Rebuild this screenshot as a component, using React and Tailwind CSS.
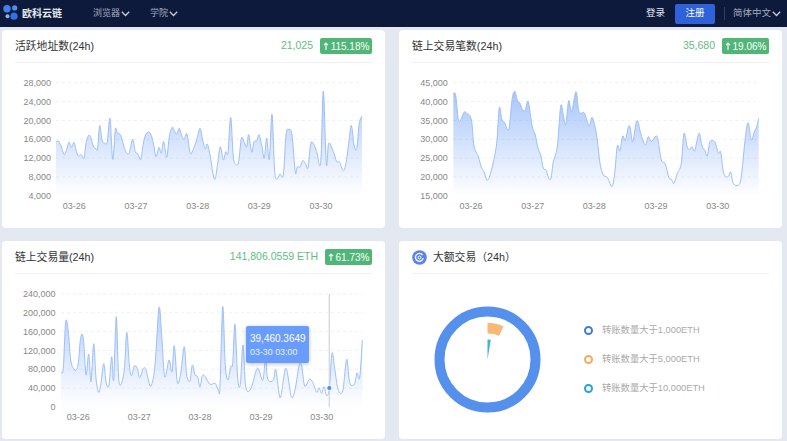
import React from "react";

const FONT = '"Liberation Sans","Noto Sans CJK SC",sans-serif';

const data1 = [168,245,176,244,183,258,192,283,198,275,207,247,214,262,222,247,228,270,235,288,244,284,252,295,258,250,266,226,272,232,280,258,290,268,293,265,299,197,306,240,314,250,322,245,330,175,338,298,346,208,352,218,362,226,372,260,380,280,388,278,398,238,406,275,414,282,422,298,432,240,442,217,452,222,460,250,468,290,477,262,484,280,491,244,500,292,508,230,516,202,523,212,530,222,538,205,546,230,553,236,561,222,570,278,578,272,590,240,600,205,608,240,616,266,622,252,630,285,640,345,646,356,653,310,661,260,670,300,677,275,684,278,692,172,700,290,708,314,716,305,724,235,732,245,740,260,746,224,755,277,762,245,770,243,777,224,785,255,793,295,800,234,808,298,816,163,824,335,832,356,840,342,850,345,858,225,866,208,876,225,886,337,892,320,900,322,908,302,916,310,924,323,932,252,940,250,950,275,962,308,970,93,979,312,986,250,1000,275,1010,305,1018,305,1030,332,1038,310,1046,250,1054,196,1062,255,1070,266,1078,190,1086,168];

const data2 = [160,100,167,106,175,178,182,180,192,157,200,160,214,178,222,258,235,290,244,322,252,335,260,360,268,352,278,315,290,250,298,143,306,180,314,188,322,208,328,200,336,120,344,94,352,120,360,130,368,150,376,150,384,123,392,170,398,205,406,225,414,265,422,285,430,325,438,330,446,355,453,355,460,305,472,260,482,138,490,165,497,195,506,122,515,155,528,95,537,155,552,158,560,178,568,198,576,172,585,200,592,240,600,310,610,345,622,352,636,380,644,340,652,258,660,272,668,228,676,242,684,205,690,200,698,245,708,190,714,185,722,220,736,255,745,230,754,245,768,228,774,240,784,300,796,312,806,352,814,358,822,370,832,340,844,310,852,220,862,262,870,268,876,260,884,272,897,220,906,258,915,272,922,288,930,245,945,247,955,280,962,276,970,335,978,350,986,348,992,336,1000,370,1015,376,1024,350,1034,250,1044,188,1054,240,1062,218,1070,200,1076,175];

const data3 = [183,410,190,400,197,260,205,290,212,375,222,403,228,405,235,385,242,308,250,310,258,420,266,357,273,440,281,326,288,430,296,472,303,445,311,386,319,445,327,450,335,365,341,435,349,245,357,440,372,412,380,292,388,390,394,422,403,393,412,400,419,428,430,400,438,405,449,450,456,445,465,390,477,218,485,300,494,425,507,375,516,410,523,332,532,442,542,415,553,335,560,420,570,438,577,390,585,420,593,425,600,456,607,422,615,424,630,448,645,445,655,465,660,455,668,215,676,390,684,435,692,395,698,385,705,268,713,430,721,448,729,330,737,455,752,462,770,403,778,408,785,432,790,430,797,370,803,432,820,436,827,403,838,480,844,478,858,400,874,485,886,460,897,392,905,392,914,453,928,433,938,442,950,472,957,458,965,475,972,455,980,482,988,460,996,355,1004,400,1014,462,1028,468,1040,373,1049,443,1063,448,1071,414,1079,428,1087,315];

// crop coords from the reference -> chart px
function toPoints(flat, dx, dy) {
  const pts = [];
  for (let i = 0; i < flat.length; i += 2) pts.push([flat[i] / 3 + dx, flat[i + 1] / 3 + dy]);
  return pts;
}

function smooth(pts) {
  let d = `M${pts[0][0].toFixed(1)} ${pts[0][1].toFixed(1)}`;
  for (let i = 0; i < pts.length - 1; i++) {
    const p0 = pts[i - 1] || pts[i];
    const p1 = pts[i];
    const p2 = pts[i + 1];
    const p3 = pts[i + 2] || p2;
    const c1x = p1[0] + (p2[0] - p0[0]) / 6;
    const c1y = p1[1] + (p2[1] - p0[1]) / 6;
    const c2x = p2[0] - (p3[0] - p1[0]) / 6;
    const c2y = p2[1] - (p3[1] - p1[1]) / 6;
    d += `C${c1x.toFixed(1)} ${c1y.toFixed(1)} ${c2x.toFixed(1)} ${c2y.toFixed(1)} ${p2[0].toFixed(1)} ${p2[1].toFixed(1)}`;
  }
  return d;
}

const Chart = ({ id, data, dx, dy, labels, gridTop, gridStep, labelRight, dates, dateY, children, opacity }) => {
  const pts = toPoints(data, dx, dy);
  const line = smooth(pts);
  const x0 = pts[0][0];
  const x1 = pts[pts.length - 1][0];
  const bottom = gridTop + gridStep * (labels.length - 1);
  const top = Math.min(...pts.map((p) => p[1]));
  return (
    <svg width="383" height="165" className="block" style={{ fontFamily: FONT }}>
      <defs>
        <linearGradient id={id} gradientUnits="userSpaceOnUse" x1="0" y1={top} x2="0" y2={bottom}>
          <stop offset="0" stopColor="#6ea0f8" stopOpacity={opacity} />
          <stop offset="1" stopColor="#6ea0f8" stopOpacity="0" />
        </linearGradient>
      </defs>
      {labels.map((l, i) => {
        const y = gridTop + gridStep * i;
        return (
          <g key={l}>
            {i < labels.length - 1 && (
              <line x1={x0} x2={x1} y1={y} y2={y} stroke="#eef0f4" strokeWidth="1" strokeDasharray="3 3" />
            )}
            <text x={labelRight} y={y + 3.2} textAnchor="end" fontSize="9" fill="#888">
              {l}
            </text>
          </g>
        );
      })}
      <path d={`${line}L${x1} ${bottom}L${x0} ${bottom}Z`} fill={`url(#${id})`} />
      <path d={line} fill="none" stroke="#9dbffa" strokeWidth="1" />
      {dates.map((d) => (
        <text key={d[0]} x={d[1]} y={dateY} textAnchor="middle" fontSize="9" fill="#888">
          {d[0]}
        </text>
      ))}
      {children}
    </svg>
  );
};

const Chevron = ({ className }) => (
  <svg width="9" height="6" viewBox="0 0 9 6" className={className} fill="none" stroke="currentColor" strokeWidth="1.3">
    <path d="M0.8 0.8l3.7 3.7 3.7-3.7" />
  </svg>
);

const Badge = ({ children, width }) => (
  <span className={`flex h-[16px] items-center justify-center gap-[2px] rounded-[2px] bg-[#50b677] text-[10px] text-white ${width}`}>
    <svg width="6" height="8" viewBox="0 0 6 8" fill="none" stroke="#fff" strokeWidth="1.1">
      <path d="M3 8V1.5M1 3.2L3 1l2 2.2" />
    </svg>
    {children}
  </span>
);

const Card = ({ title, value, badge, badgeWidth, children }) => (
  <div className="relative h-[198px] rounded-[4px] bg-white">
    <div className="mx-[13px] flex h-[33px] items-center justify-between border-b border-[#f0f1f4]">
      <span className="text-[10.8px] text-[#333]">{title}</span>
      <div className="flex items-center gap-[7px]">
        <span className="text-[10.5px] text-[#62bd82]">{value}</span>
        <Badge width={badgeWidth}>{badge}</Badge>
      </div>
    </div>
    {children}
  </div>
);

const LegendRow = ({ ring, text }) => (
  <div className="flex h-[13px] items-center gap-[9px]">
    <span className={`h-[9px] w-[9px] rounded-full border-2 ${ring}`} />
    <span className="text-[9.3px] text-[#aaa]">{text}</span>
  </div>
);

const App = () => {
  return (
    <div className="h-[441px] w-[787px] overflow-hidden bg-[#e4e8f0]" style={{ fontFamily: FONT }}>
      <header className="flex h-[27px] items-center bg-[#0d1a3c] pl-[3px] pr-[6px]">
        <svg width="16" height="18" viewBox="0 0 16 18">
          <circle cx="4" cy="3.8" r="3.7" fill="#3b82f0" />
          <circle cx="11.7" cy="2.9" r="2.6" fill="#4a90f2" />
          <circle cx="4.5" cy="11.2" r="2" fill="#7fb8f5" />
          <circle cx="11" cy="11.2" r="3.6" fill="#2f72e8" />
        </svg>
        <span className="ml-[3px] text-[10px] font-bold text-[#e8ebf2]">欧科云链</span>
        <nav className="ml-[31px] flex items-center gap-[20px] text-[9px] text-[#a6adbd]">
          <span className="flex items-center gap-[1px]">
            浏览器
            <Chevron className="text-[#c8cdd8]" />
          </span>
          <span className="flex items-center gap-[1px]">
            学院
            <Chevron className="text-[#c8cdd8]" />
          </span>
        </nav>
        <div className="ml-auto flex items-center text-[9.5px]">
          <span className="text-[#e8ebf2]">登录</span>
          <span className="ml-[10px] flex h-[20px] w-[40px] items-center justify-center rounded-[2px] bg-[#2f62d8] text-white">
            注册
          </span>
          <span className="ml-[9px] h-[13px] w-px bg-[#333f5c]" />
          <span className="ml-[8px] flex items-center gap-[1px] text-[#a6adbd]">
            简体中文
            <Chevron className="text-[#c8cdd8]" />
          </span>
        </div>
      </header>

      <main className="grid grid-cols-[383px_383px] gap-x-[14px] gap-y-[13px] pl-[2px] pt-[3px]">
        <Card title="活跃地址数(24h)" value="21,025" badge="115.18%" badgeWidth="w-[52px]">
          <Chart
            id="g1"
            data={data1}
            dx={-2}
            dy={-3}
            labels={["28,000", "24,000", "20,000", "16,000", "12,000", "8,000", "4,000"]}
            gridTop={19.7}
            gridStep={18.85}
            labelRight={49}
            dates={[["03-26", 72.3], ["03-27", 134], ["03-28", 195.7], ["03-29", 257.3], ["03-30", 319]]}
            dateY={146}
            opacity={0.55}
          />
        </Card>

        <Card title="链上交易笔数(24h)" value="35,680" badge="19.06%" badgeWidth="w-[47px]">
          <Chart
            id="g2"
            data={data2}
            dx={1}
            dy={-3}
            labels={["45,000", "40,000", "35,000", "30,000", "25,000", "20,000", "15,000"]}
            gridTop={19.7}
            gridStep={18.85}
            labelRight={48.7}
            dates={[["03-26", 72], ["03-27", 133.7], ["03-28", 195.3], ["03-29", 257], ["03-30", 318.7]]}
            dateY={146}
            opacity={0.6}
          />
        </Card>

        <Card title="链上交易量(24h)" value="141,806.0559 ETH" badge="61.73%" badgeWidth="w-[47px]">
          <Chart
            id="g3"
            data={data3}
            dx={-2}
            dy={-39}
            labels={["240,000", "200,000", "160,000", "120,000", "80,000", "40,000", "0"]}
            gridTop={20}
            gridStep={18.8}
            labelRight={53.5}
            dates={[["03-26", 76.3], ["03-27", 137.3], ["03-28", 198], ["03-29", 259], ["03-30", 319.7]]}
            dateY={146}
            opacity={0.5}
          >
            <line x1="327.3" x2="327.3" y1="20" y2="133" stroke="#d2d4d8" strokeWidth="1.2" />
            <circle cx="327.3" cy="114" r="2.6" fill="#4d8df5" stroke="#fff" strokeWidth="1" />
          </Chart>
          <div className="absolute left-[244px] top-[85px] flex h-[37px] w-[63px] flex-col justify-center gap-[3px] rounded-[2px] bg-[#689cfd] pl-[4px] text-white shadow-[0_1px_4px_rgba(60,80,120,0.35)]">
            <span className="text-[10px] leading-[11px]">39,460.3649</span>
            <span className="text-[8.9px] leading-[10px] text-[#eaf1ff]">03-30 03:00</span>
          </div>
        </Card>

        <div className="h-[198px] rounded-[4px] bg-white">
          <div className="mx-[13px] flex h-[33px] items-center gap-[6px] border-b border-[#f0f1f4]">
            <svg width="15" height="15" viewBox="0 0 15 15">
              <circle cx="7.5" cy="7.5" r="7.3" fill="#5a82ee" />
              <path d="M10.6 5.2A3.9 3.9 0 1 0 11.2 8" fill="none" stroke="#fff" strokeWidth="1.3" />
              <circle cx="7.5" cy="7.5" r="1.5" fill="none" stroke="#fff" strokeWidth="1" />
            </svg>
            <span className="text-[10.8px] text-[#333]">大额交易（24h）</span>
          </div>
          <div className="flex items-center pl-[35px] pt-[32px]">
            <svg width="107" height="107" viewBox="0 0 107 107" className="shrink-0">
              <circle cx="53.5" cy="53.5" r="48" fill="none" stroke="#5590ec" strokeWidth="10" />
              <path d="M53.5 16.8A36.7 36.7 0 0 1 69.5 20.5L65 29.7A26 26 0 0 0 53.5 27.5Z" fill="#fdb774" />
              <path d="M53.5 53.5L53.5 33.5A20 20 0 0 1 56.8 33.8Z" fill="#3fb3e0" />
            </svg>
            <div className="ml-[43px] flex flex-col gap-[16px]">
              <LegendRow ring="border-[#3f79e8]" text="转账数量大于1,000ETH" />
              <LegendRow ring="border-[#fda95c]" text="转账数量大于5,000ETH" />
              <LegendRow ring="border-[#23a3dc]" text="转账数量大于10,000ETH" />
            </div>
          </div>
        </div>
      </main>
    </div>
  );
};

export default App;
